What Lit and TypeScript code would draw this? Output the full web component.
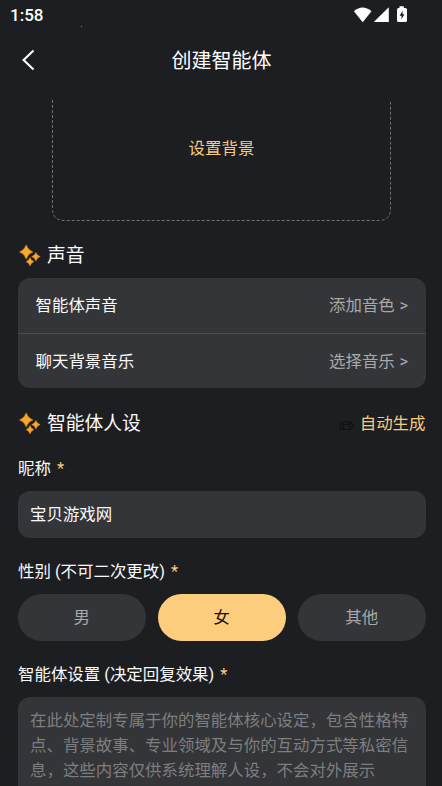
import { LitElement, html, css } from "lit";
import { customElement, property, state } from "lit/decorators.js";
import { classMap } from "lit/directives/class-map.js";

@customElement("section-title")
class SectionTitle extends LitElement {
  @property() label = "";
  static styles = css`
    :host { display: flex; align-items: center; height: 28px; font-size: 18.8px; line-height: 28px; color: #fafafa; }
    svg { width: 22px; height: 22px; margin: 0 6.5px 3px .5px; flex: none; }
    .grow { flex: 1; }
  `;
  render() {
    return html`
      <svg viewBox="0 0 22 22">
        <g fill="#f9a72c" stroke="#dc8824" stroke-width=".5">
          <path d="M7.2 .8Q8.8 6 14 8Q8.8 9.8 7.2 15.2Q5.6 9.8 .4 8Q5.6 6 7.2 .8Z" />
          <path d="M16.9 8.4Q18 11.6 21.2 12.6Q18 13.6 16.9 16.9Q15.8 13.6 12.6 12.6Q15.8 11.6 16.9 8.4Z" />
          <path d="M11 13.6Q12 16.7 14.9 17.7Q12 18.8 11 21.9Q10 18.8 7.2 17.7Q10 16.7 11 13.6Z" />
        </g>
      </svg>
      <span class="grow">${this.label}</span>
      <slot></slot>
    `;
  }
}

@customElement("field-label")
class FieldLabel extends LitElement {
  @property() label = "";
  static styles = css`
    :host { display: block; height: 24px; line-height: 24px; color: #fafafa; }
    .star { color: #fdcd7e; margin-left: 6px; }
  `;
  render() {
    return html`${this.label}<span class="star">*</span>`;
  }
}

@customElement("app-root")
class AppRoot extends LitElement {
  @state() private gender = "女";
  private genders = ["男", "女", "其他"];
  private rows = [
    ["智能体声音", "添加音色"],
    ["聊天背景音乐", "选择音乐"],
  ];

  static styles = css`
    :host {
      display: flex; flex-direction: column; height: 786px; overflow: hidden;
      background: #1d1e21; color: #fafafa;
      font-family: Roboto, "Noto Sans CJK SC", sans-serif; font-size: 16.45px;
    }
    .status { flex: none; display: flex; height: 30px; padding: 0 33px 0 10px; box-sizing: border-box; }
    .time { width: 71px; font-size: 17px; font-weight: 500; line-height: 31px; color: #fff; }
    .speck { width: 1px; height: 1px; margin-top: 26px; background: #77787a; }
    .system { width: 56px; height: 18px; margin: 6px 0 0 auto; }
    .nav { flex: none; display: grid; grid-template-columns: 60px 1fr 60px; align-items: center; height: 60px; }
    .back { width: 14px; height: 22px; margin-left: 21px; }
    .title { padding: 2px 0 0 1px; text-align: center; font-size: 20px; line-height: 30px; color: #fff; }
    .content { flex: 1; min-height: 0; overflow: hidden; margin-top: 9px; padding: 0 16.5px 0 18px; }
    .upload { display: grid; height: 122px; margin: 0 34px; }
    .upload > * { grid-area: 1 / 1; }
    .frame { width: 340px; height: 122px; }
    .upload-text { justify-self: center; margin: 38px 1px 0 0; line-height: 24px; color: #f7ca80; }
    .voice { margin-top: 21px; }
    .card { height: 110px; margin-top: 8px; border-radius: 12px; background: #343538; }
    .row { display: flex; justify-content: space-between; align-items: center; height: 55px; box-sizing: border-box; padding: 0 17.5px 3px; }
    .row + .row { height: 56px; border-top: 1px solid #4b4c4f; }
    .value { color: #a8a8aa; word-spacing: .5px; }
    .persona { margin-top: 22px; }
    .auto { display: flex; align-items: center; gap: 5px; font-size: 16.45px; color: #f7ca80; }
    .pencil { width: 16px; height: 12px; margin-top: 4px; }
    .name-label { margin-top: 19px; }
    .input { height: 47px; margin-top: 10px; padding: 0 12px; border-radius: 12px; background: #343538; line-height: 48px; }
    .gender-label { margin-top: 22px; }
    .pills { display: grid; grid-template-columns: repeat(3, 1fr); gap: 12.5px; margin-top: 10px; }
    .pill { height: 47px; border-radius: 24px; background: #343538; color: #a8a8aa; text-align: center; line-height: 47px; }
    .pill.active { background: #fdcd7e; color: #111; }
    .setting-label { margin-top: 22px; }
    .textarea { height: 110px; margin-top: 10px; padding: 12px; border-radius: 12px; background: #343538; color: #7d7e80; line-height: 24.9px; white-space: nowrap; }
  `;

  render() {
    return html`
      <div class="status">
        <span class="time">1:58</span>
        <i class="speck"></i>
        <svg class="system" viewBox="0 0 56 18" fill="#fff">
          <path d="M.9 5.2Q9.6-2.3 18.5 5.2L9.7 16.3Z" />
          <path d="M21 16V15.7L35.8 1.2V16Z" />
          <path d="M46.5 .3H50.8V2H52.3Q54 2 54 3.5V14.5Q54 16 52.3 16H45.6Q44 16 44 14.5V3.5Q44 2 45.6 2H46.5Z" />
          <path d="M49.6 4.8L46.6 9.7H48.5V13.2L51.4 8.3H49.6Z" fill="#1d1e21" />
        </svg>
      </div>
      <div class="nav">
        <svg class="back" viewBox="0 0 14 22" fill="none" stroke="#fff" stroke-width="2.1">
          <path d="M12.5 1.5L2.6 11L12.5 20.5" />
        </svg>
        <div class="title">创建智能体</div>
      </div>
      <div class="content">
        <div class="upload">
          <svg class="frame" viewBox="0 0 340 122" fill="none" stroke="#707174" stroke-width="1">
            <path stroke-dasharray="3 2" d="M.5 1V109.5Q.5 121.5 12.5 121.5H326.5Q338.5 121.5 338.5 109.5V1" />
          </svg>
          <span class="upload-text">设置背景</span>
        </div>
        <section-title class="voice" label="声音"></section-title>
        <div class="card">
          ${this.rows.map(([name, value]) => html`<div class="row"><span>${name}</span><span class="value">${value} &gt;</span></div>`)}
        </div>
        <section-title class="persona" label="智能体人设">
          <span class="auto">
            <svg class="pencil" viewBox="0 0 16 12" fill="none" stroke="#101112" stroke-width="1.1">
              <path d="M3 2H11L15 5.5L11 9.5H3Q1 9.5 1 7.5V4Q1 2 3 2ZM4 2V9.5M4 4.5H11M11 2V9.5" />
            </svg>自动生成</span>
        </section-title>
        <field-label class="name-label" label="昵称"></field-label>
        <div class="input">宝贝游戏网</div>
        <field-label class="gender-label" label="性别 (不可二次更改)"></field-label>
        <div class="pills">
          ${this.genders.map((g) => html`<div class=${classMap({ pill: true, active: g === this.gender })} @click=${() => (this.gender = g)}>${g}</div>`)}
        </div>
        <field-label class="setting-label" label="智能体设置 (决定回复效果)"></field-label>
        <div class="textarea">在此处定制专属于你的智能体核心设定，包含性格特<br />点、背景故事、专业领域及与你的互动方式等私密信<br />息，这些内容仅供系统理解人设，不会对外展示</div>
      </div>
    `;
  }
}
